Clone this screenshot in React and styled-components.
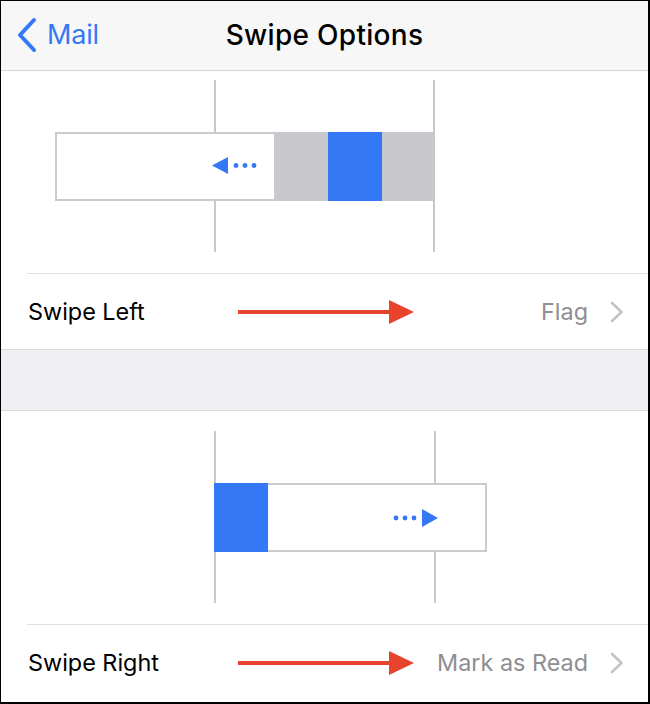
import React from "react";
import styled, { createGlobalStyle } from "styled-components";

const Global = createGlobalStyle`
  html, body { margin: 0; padding: 0; background: #000; }
  body { font-family: Inter, "Liberation Sans", sans-serif; -webkit-font-smoothing: antialiased; }
`;

const Frame = styled.div`
  width: 647px;
  height: 701px;
  border-style: solid;
  border-color: #000;
  border-width: 1px 2px 2px 1px;
  background: #fff;
  overflow: hidden;
  display: flex;
  flex-direction: column;
`;

const NavBar = styled.header`
  flex: none;
  background: #f7f7f8;
  border-bottom: 1px solid #d6d6da;
  display: grid;
  grid-template-columns: 1fr auto 1fr;
  align-items: center;
  padding-bottom: 2px;
  box-sizing: content-box;
  height: 67px;
`;

const BackButton = styled.div`
  display: flex;
  align-items: center;
  gap: 9px;
  padding-left: 15px;
  color: #3478f6;
  font-size: 27px;
  letter-spacing: -0.2px;
`;

const Title = styled.h1`
  margin: 0;
  font-size: 28px;
  font-weight: 500;
  color: #000;
  letter-spacing: 0.3px;
`;

const Section = styled.section`
  background: #fff;
  flex: none;
`;

const Diagram = styled.svg`
  display: block;
  width: 647px;
  height: ${(p) => p.$h}px;
`;

const Row = styled.div`
  position: relative;
  margin-left: 26px;
  border-top: 1px solid #e0e0e4;
  height: 75px;
  display: flex;
  align-items: center;
  justify-content: space-between;
  padding-right: 24px;
`;

const Label = styled.span`
  font-size: 23.4px;
  color: #000;
  padding-left: 1px;
`;

const Value = styled.span`
  display: flex;
  align-items: center;
  gap: 22px;
  font-size: 23.4px;
  color: #8e8e93;
`;

const RedArrow = styled.svg`
  position: absolute;
  left: 211px;
  top: 50%;
  transform: translateY(-50%);
  width: 177px;
  height: 26px;
`;

const Spacer = styled.div`
  height: 60px;
  flex: none;
  background: #efeff4;
  border-top: 1px solid #d9d9de;
  border-bottom: 1px solid #d9d9de;
`;

const LINE = "#c8c8cc";

function Chevron() {
  return (
    <svg width="14" height="22" viewBox="0 0 14 22">
      <path d="M2 2 L11.5 11 L2 20" fill="none" stroke="#c4c4c8" strokeWidth="2.6" strokeLinecap="round" strokeLinejoin="round" />
    </svg>
  );
}

function OptionRow({ label, value }) {
  return (
    <Row>
      <Label>{label}</Label>
      <RedArrow viewBox="0 0 177 26">
        <rect x="0" y="11" width="154" height="4" fill="#e8432d" />
        <polygon points="151,1 176,13 151,25" fill="#e8432d" />
      </RedArrow>
      <Value>
        {value}
        <Chevron />
      </Value>
    </Row>
  );
}

export default function App() {
  return (
    <>
      <Global />
      <Frame>
        <NavBar>
          <BackButton>
            <svg width="22" height="36" viewBox="0 0 22 36">
              <path d="M18 3 L4 18 L18 33" fill="none" stroke="#3478f6" strokeWidth="4" strokeLinecap="round" strokeLinejoin="round" />
            </svg>
            Mail
          </BackButton>
          <Title>Swipe Options</Title>
          <div />
        </NavBar>

        <Section>
          <Diagram $h={202} viewBox="0 0 647 202">
            <line x1="214" y1="9" x2="214" y2="181" stroke={LINE} strokeWidth="2" />
            <line x1="433" y1="9" x2="433" y2="181" stroke={LINE} strokeWidth="2" />
            <rect x="274" y="61" width="160" height="69" fill="#c7c7cc" />
            <rect x="327" y="61" width="54" height="69" fill="#3478f6" />
            <rect x="55" y="62" width="219" height="67" fill="#fff" stroke="#cbcbcf" strokeWidth="2" />
            <polygon points="211,94.5 227,86 227,103" fill="#3478f6" />
            <circle cx="235" cy="94.5" r="2.4" fill="#3478f6" />
            <circle cx="244" cy="94.5" r="2.4" fill="#3478f6" />
            <circle cx="253" cy="94.5" r="2.4" fill="#3478f6" />
          </Diagram>
          <OptionRow label="Swipe Left" value="Flag" />
        </Section>

        <Spacer />

        <Section>
          <Diagram $h={213} viewBox="0 0 647 213">
            <line x1="214" y1="20" x2="214" y2="192" stroke={LINE} strokeWidth="2" />
            <line x1="434" y1="20" x2="434" y2="192" stroke={LINE} strokeWidth="2" />
            <rect x="214" y="73" width="271" height="67" fill="#fff" stroke="#cbcbcf" strokeWidth="2" />
            <rect x="213" y="72" width="54" height="69" fill="#3478f6" />
            <circle cx="395" cy="107" r="2.4" fill="#3478f6" />
            <circle cx="404" cy="107" r="2.4" fill="#3478f6" />
            <circle cx="413" cy="107" r="2.4" fill="#3478f6" />
            <polygon points="421,98 437,107 421,116" fill="#3478f6" />
          </Diagram>
          <OptionRow label="Swipe Right" value="Mark as Read" />
        </Section>
      </Frame>
    </>
  );
}
